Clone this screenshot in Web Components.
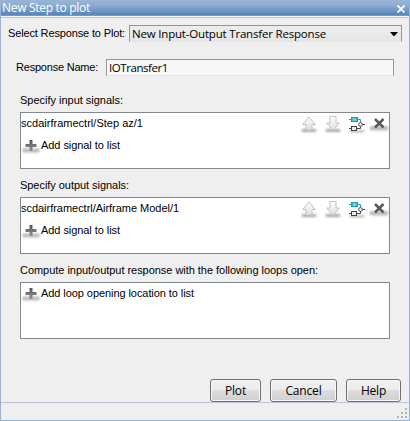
<!DOCTYPE html>
<html lang="en"><head><meta charset="utf-8"><title>New Step to plot</title>
<style>html,body{margin:0;width:410px;height:421px;overflow:hidden}body{font:11px/14px "Liberation Sans",sans-serif;color:#000}</style></head>
<body><step-dialog></step-dialog>
<script>
const define = (name, html, init) => customElements.define(name, class extends HTMLElement {
  constructor(){ super(); this.attachShadow({mode:'open'}).innerHTML = html; }
  connectedCallback(){ if(init) init(this, this.shadowRoot); }
});

// Text run whose tracking is adjusted to fill the given width.
define('fit-text', `<style>:host{display:inline-block;white-space:pre;flex:none}span{display:inline-block}:host([ui]){font-family:"Open Sans","Noto Sans",sans-serif}</style><span></span>`, (el, root) => {
  const s = root.querySelector('span'); s.textContent = el.getAttribute('text');
  const w = +el.getAttribute('w');
  const fit = () => { s.style.letterSpacing = '0'; const n = s.textContent.length;
    s.style.letterSpacing = ((w - s.getBoundingClientRect().width) / n) + 'px'; };
  el.style.width = w + 'px'; fit();
});

const shadow = `<defs><filter id="b" x="-30%" y="-80%" width="160%" height="260%"><feGaussianBlur stdDeviation="1"/></filter><linearGradient id="g" x2="0" y2="1"><stop stop-color="#555"/><stop offset="1" stop-color="#929292"/></linearGradient><linearGradient id="a" x2="0" y2="1"><stop stop-color="#fff"/><stop offset="1" stop-color="#dedede"/></linearGradient><linearGradient id="t" x2="1" y2="0"><stop stop-color="#35a8b6"/><stop offset=".5" stop-color="#7fdce4"/><stop offset="1" stop-color="#35a8b6"/></linearGradient></defs>`;
const icons = {
  plus: `<rect x="1" y="12.5" width="18" height="4" rx="2" fill="#bbb" filter="url(#b)"/><path d="M8.5 4h3v4h4v3h-4v4h-3v-4h-4V8h4z" fill="url(#g)"/>`,
  up: `<rect x="2.5" y="15" width="15" height="3" rx="1.5" fill="#aaa" filter="url(#b)"/><path d="M10 2.8L16.3 10.5H13v5.5H7v-5.5H3.7z" fill="url(#a)" stroke="#c2c2c2"/>`,
  down: `<rect x="2.5" y="15" width="15" height="3" rx="1.5" fill="#aaa" filter="url(#b)"/><path d="M7 2.5h6V9h3.3L10 16.5 3.7 9H7z" fill="url(#a)" stroke="#c2c2c2"/>`,
  diagram: `<rect x="2.5" y="16" width="15" height="2.5" rx="1" fill="#bbb" filter="url(#b)"/><path d="M2 5.5h2M10 5.5h3.5v3" stroke="#249aa8" fill="none"/><rect x="4.5" y="3.5" width="6" height="4" fill="url(#t)" stroke="#249aa8"/><path d="M2 14.5h2M10 14.5h3.5V12M15 10.5h3" stroke="#444" fill="none"/><rect x="4.5" y="12.5" width="5" height="4" fill="#eee" stroke="#444"/><circle cx="13.5" cy="10.5" r="1.9" fill="#eee" stroke="#555"/>`,
  cross: `<rect x="0.5" y="12" width="19" height="4.5" rx="2" fill="#bbb" filter="url(#b)"/><path d="M6 5l8.5 8.5M14.5 5L6 13.5" stroke="#585858" stroke-width="2.5" fill="none"/>`
};
define('tool-icon', `<style>:host{display:block;width:20px;height:20px;flex:none}svg{display:block}</style><div></div>`, (el, root) =>
  root.querySelector('div').innerHTML = `<svg width="20" height="20" viewBox="0 0 20 20">${shadow}${icons[el.getAttribute('name')]}</svg>`);

define('title-bar', `<style>:host{display:flex;height:15px;background:linear-gradient(#9ab4d5,#8eacd1 35%,#5485bc);border-bottom:1px solid #8296ad;align-items:center;justify-content:space-between;color:#fff;padding:0 4px 0 1px;font-size:12px;line-height:16px}svg{display:block;margin-top:2px}</style><slot></slot><svg width="8" height="8"><path d="M.5 .5l7 7M7.5 .5l-7 7" stroke="#fff" stroke-width="1.8"/></svg>`);
define('value-box', `<style>:host{display:flex;box-sizing:border-box;height:17px;border:1px solid #959595;border-bottom-color:#e5e5e5;background:#f7f7f7;align-items:center;justify-content:space-between;padding:1px 3px 0 2px;font-size:11.5px}:host([drop]){background:linear-gradient(#ededed,#e6e6e6)}svg{display:none}:host([drop]) svg{display:block}</style><slot></slot><svg width="8" height="4"><path d="M0 0h8L4.5 4h-1z"/></svg>`);
define('signal-list', `<style>:host{display:block;box-sizing:border-box;width:370px;height:57px;border:1px solid #828790;background:#fff}</style><slot></slot>`);
define('signal-row', `<style>:host{display:flex;height:22px;align-items:center}::slotted(fit-text){margin-bottom:2px}.tools{margin-left:auto;display:flex;gap:4px}.tools tool-icon:last-child{margin-left:-2px}</style><slot></slot><div class="tools"><tool-icon name="up"></tool-icon><tool-icon name="down"></tool-icon><tool-icon name="diagram"></tool-icon><tool-icon name="cross"></tool-icon></div>`);
define('add-row', `<style>:host{display:flex;height:22px;align-items:center}::slotted(fit-text){margin-bottom:2px}</style><tool-icon name="plus"></tool-icon><slot></slot>`);
define('push-button', `<style>:host{display:flex;box-sizing:border-box;height:23px;border:1px solid #707070;border-radius:3px;background:linear-gradient(#f2f2f2,#ebebeb 48%,#dddddd 50%,#cfcfcf);box-shadow:inset 0 0 0 1px #f8f8f8;align-items:center;justify-content:center;font-size:12px}</style><slot></slot>`);
define('resize-grip', `<style>:host{display:block}svg{display:block}</style><svg width="12" height="11"><path d="M9 1h2M5 5h2M9 5h2M1 9h2M5 9h2M9 9h2" stroke="#b8b4a4" stroke-width="2"/></svg>`);

define('step-dialog', `<style>
:host{display:flex;flex-direction:column;box-sizing:border-box;width:410px;height:421px;background:#efefef;border:1px solid #98b4d5;border-top:0}
main{border-top:1px solid #f7f7f7;box-shadow:inset 0 1px #bcc5d5;height:386px;box-sizing:border-box;flex:none;display:flex;flex-direction:column}
.field{display:flex;align-items:center;flex:none;height:17px}
.select{margin:8px 7px 0 7px}.name{margin:17px 15px 0 15px}.field value-box{flex:1}.field>fit-text{margin-bottom:1px}
section{margin-left:19px;flex:none}section>fit-text{display:block;height:14px;margin-bottom:5px}
.in{margin-top:17px}.next{margin-top:9px}
nav{display:flex;margin:40px 8px 0 209px}.c{margin-left:9px}
footer{flex:1;border-top:1px solid #bcc5d8;display:flex;justify-content:flex-end;align-items:flex-end;padding:0 1px 1px}
</style>
<title-bar><fit-text ui text="New Step to plot" w="88"></fit-text></title-bar>
<main>
<div class="field select"><fit-text text="Select Response to Plot:" w="117" style="margin-right:4px"></fit-text><value-box drop><fit-text ui text="New Input-Output Transfer Response" w="194"></fit-text></value-box></div>
<div class="field name"><fit-text text="Response Name:" w="82" style="margin-right:8px"></fit-text><value-box><fit-text ui text="IOTransfer1" w="59"></fit-text></value-box></div>
<section class="in"><fit-text text="Specify input signals:" w="103"></fit-text><signal-list><signal-row><fit-text text="scdairframectrl/Step az/1" w="122"></fit-text></signal-row><add-row><fit-text text="Add signal to list" w="79"></fit-text></add-row></signal-list></section>
<section class="next"><fit-text text="Specify output signals:" w="109"></fit-text><signal-list><signal-row><fit-text text="scdairframectrl/Airframe Model/1" w="158"></fit-text></signal-row><add-row><fit-text text="Add signal to list" w="79"></fit-text></add-row></signal-list></section>
<section class="next"><fit-text text="Compute input/output response with the following loops open:" w="298"></fit-text><signal-list><add-row><fit-text text="Add loop opening location to list" w="153"></fit-text></add-row></signal-list></section>
<nav><push-button style="width:51px"><fit-text ui text="Plot" w="21"></fit-text></push-button><push-button class="c" style="width:67px"><fit-text ui text="Cancel" w="36"></fit-text></push-button><push-button class="c" style="width:55px"><fit-text ui text="Help" w="25"></fit-text></push-button></nav>
</main><footer><resize-grip></resize-grip></footer>`);
</script></body></html>
